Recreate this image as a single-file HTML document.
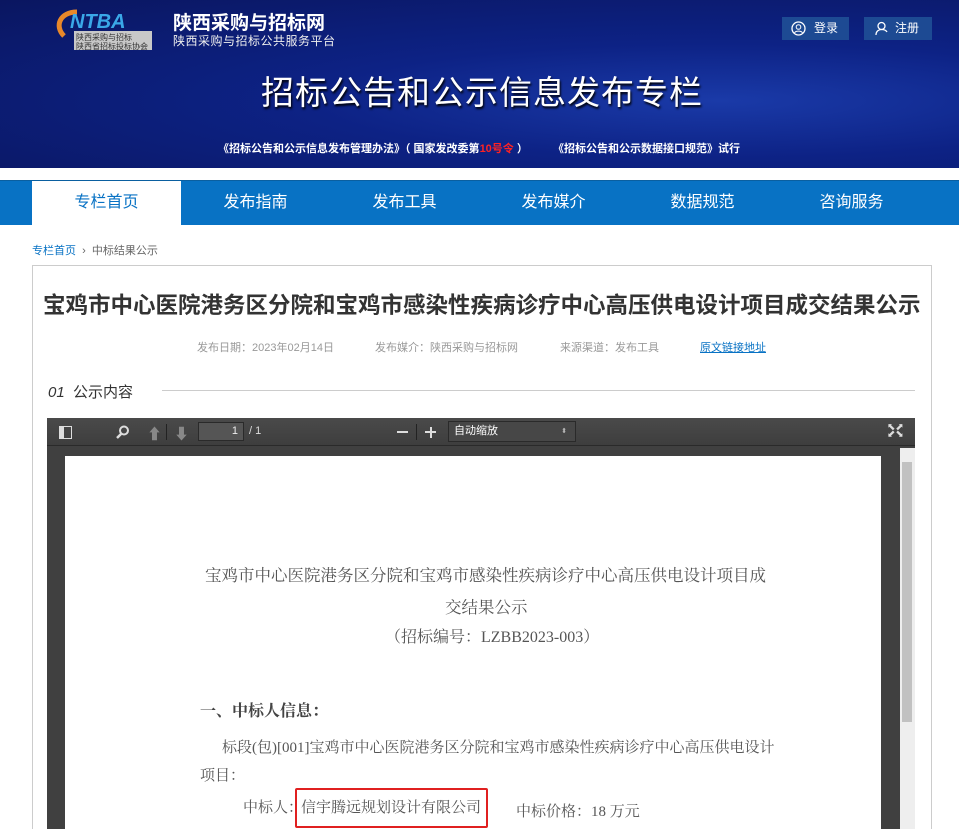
<!DOCTYPE html>
<html><head><meta charset="utf-8"><style>
*{margin:0;padding:0;box-sizing:border-box}
html,body{width:959px;height:829px;overflow:hidden}
body{background:#fff;font-family:"Liberation Sans","Noto Sans CJK SC",sans-serif;position:relative}
.hdr{position:absolute;left:0;top:0;width:959px;height:168px;background:radial-gradient(ellipse at 75% 60%,#1a3aa8 0%,#0d2285 40%,#0a1660 100%);overflow:hidden}
.abs{position:absolute}
.btn{position:absolute;top:17px;height:23px;background:#1d4a93;color:#fff;font-size:12px;line-height:23px}
.nav{position:absolute;left:0;top:180px;width:959px;height:45px;background:#0872c4;border-top:1px solid #0a5fa0}
.nav div{position:absolute;top:0;width:149px;height:44px;text-align:center;line-height:44px;color:#fff;font-size:16px}
.box{position:absolute;left:32px;top:265px;width:900px;height:580px;border:1px solid #ccc}
.meta{position:absolute;top:339px;font-size:11px;color:#999}
.pdf{position:absolute;left:47px;top:418px;width:868px;height:411px;background:#404040;overflow:hidden}
.tb{position:absolute;left:0;top:0;width:868px;height:28px;background:linear-gradient(#4a4a4a,#3e3e3e);border-bottom:1px solid #2a2a2a}
.pg{position:absolute;left:18px;top:38px;width:816px;height:400px;background:#fff;font-family:"Liberation Serif","Noto Serif CJK SC",serif;color:#555}
</style></head><body>
<div class="hdr">
 <svg class="abs" style="left:52px;top:6px" width="115" height="44"><path d="M12 30 C2 20,8 6,25 6" stroke="#e8882a" stroke-width="5" fill="none"/><text x="18" y="22" font-family="Liberation Sans" font-style="italic" font-weight="bold" font-size="20" fill="#3aa8e8">NTBA</text><rect x="22" y="25" width="78" height="19" fill="#c8c8c8"/><text x="24" y="34" font-size="8" fill="#333" font-family="Noto Sans CJK SC">陕西采购与招标</text><text x="24" y="43" font-size="8" fill="#333" font-family="Noto Sans CJK SC">陕西省招标投标协会</text></svg>
 <div class="abs" style="left:173px;top:8px;color:#fff;font-size:19px;font-weight:bold">陕西采购与招标网</div>
 <div class="abs" style="left:173px;top:32px;color:#eee;font-size:12px;letter-spacing:0.5px">陕西采购与招标公共服务平台</div>
 <div class="btn" style="left:782px;width:67px"><svg class="abs" style="left:9px;top:4px" width="15" height="15"><circle cx="7.5" cy="7.5" r="6.5" stroke="#fff" fill="none" stroke-width="1.3"/><circle cx="7.5" cy="6" r="2.3" stroke="#fff" fill="none"/><path d="M3.5 12c1-2.5 7-2.5 8 0" stroke="#fff" fill="none"/></svg><span class="abs" style="left:32px">登录</span></div>
 <div class="btn" style="left:864px;width:68px"><svg class="abs" style="left:11px;top:4px" width="15" height="15"><circle cx="6.5" cy="5" r="3.5" stroke="#fff" fill="none" stroke-width="1.3"/><path d="M1 14c0-4 3-5.5 5.5-5.5S11 9 12 11" stroke="#fff" fill="none" stroke-width="1.3"/></svg><span class="abs" style="left:31px">注册</span></div>
 <div class="abs" style="left:261px;top:66px;color:#fff;font-size:33px;letter-spacing:1px;text-shadow:1px 2px 2px #000">招标公告和公示信息发布专栏</div>
 <div class="abs" style="left:218px;top:140px;color:#fff;font-size:11px;font-weight:bold">《招标公告和公示信息发布管理办法》（ 国家发改委第<span style="color:#f22">10号令</span> ）</div>
 <div class="abs" style="left:553px;top:140px;color:#fff;font-size:11px;font-weight:bold">《招标公告和公示数据接口规范》试行</div>
</div>
<div class="nav">
 <div style="left:32px;background:#fff;color:#0872c4">专栏首页</div>
 <div style="left:181px">发布指南</div><div style="left:330px">发布工具</div><div style="left:479px">发布媒介</div><div style="left:628px">数据规范</div><div style="left:777px">咨询服务</div>
</div>
<div class="abs" style="left:32px;top:242px;font-size:11px;color:#0872c4">专栏首页 <span style="color:#666">&nbsp;›&nbsp; 中标结果公示</span></div>
<div class="box"></div>
<div class="abs" style="left:43px;top:288px;font-size:22.5px;font-weight:bold;color:#333;white-space:nowrap">宝鸡市中心医院港务区分院和宝鸡市感染性疾病诊疗中心高压供电设计项目成交结果公示</div>
<div class="meta" style="left:197px">发布日期：2023年02月14日</div>
<div class="meta" style="left:375px">发布媒介：陕西采购与招标网</div>
<div class="meta" style="left:560px">来源渠道：发布工具</div>
<div class="meta" style="left:700px;color:#0872c4;text-decoration:underline">原文链接地址</div>
<div class="abs" style="left:48px;top:381px;font-size:15px;color:#333"><i>01</i>&nbsp; 公示内容</div>
<div class="abs" style="left:162px;top:390px;width:753px;height:1px;background:#ccc"></div>
<div class="pdf">
 <div class="tb">
  <svg class="abs" style="left:12px;top:8px" width="13" height="13"><rect x="0.5" y="0.5" width="12" height="12" stroke="#ddd" fill="none"/><rect x="1" y="1" width="4" height="11" fill="#ddd"/></svg>
  <svg class="abs" style="left:69px;top:7px" width="14" height="14"><circle cx="8" cy="5.5" r="4" stroke="#ddd" stroke-width="2" fill="none"/><path d="M5 9 1 13" stroke="#ddd" stroke-width="2.5"/></svg>
  <div class="abs" style="left:100px;top:5px;color:#888;font-size:15px">⬆</div>
  <div class="abs" style="left:119px;top:6px;width:1px;height:16px;background:#222"></div>
  <div class="abs" style="left:127px;top:5px;color:#888;font-size:15px">⬇</div>
  <div class="abs" style="left:151px;top:4px;width:46px;height:19px;background:#555;border:1px solid #2a2a2a;color:#eee;font-size:11px;text-align:right;padding-right:5px;line-height:17px">1</div>
  <div class="abs" style="left:202px;top:7px;color:#ddd;font-size:11px">/ 1</div>
  <div class="abs" style="left:350px;top:13px;width:11px;height:2px;background:#ddd"></div>
  <div class="abs" style="left:369px;top:6px;width:1px;height:16px;background:#222"></div>
  <div class="abs" style="left:378px;top:13px;width:11px;height:2px;background:#ddd"></div><div class="abs" style="left:382.5px;top:8.5px;width:2px;height:11px;background:#ddd"></div>
  <div class="abs" style="left:401px;top:3px;width:128px;height:21px;background:#474747;border:1px solid #2a2a2a;color:#fff;font-size:11px;line-height:19px;padding-left:5px">自动缩放<span style="position:absolute;right:8px;font-size:7px;color:#bbb">⬍</span></div>
  <div class="abs" style="left:840px;top:6px;color:#ddd;font-size:10px;line-height:7px">⬉⬈<br>⬋⬊</div>
 </div>
 <div class="abs" style="left:853px;top:30px;width:15px;height:390px;background:#eee"><div class="abs" style="left:2px;top:14px;width:10px;height:260px;background:#c1c1c1"></div></div>
 <div class="pg">
  <div class="abs" style="left:140px;top:106px;font-size:16.5px;white-space:nowrap">宝鸡市中心医院港务区分院和宝鸡市感染性疾病诊疗中心高压供电设计项目成</div>
  <div class="abs" style="left:380px;top:138px;font-size:16.5px">交结果公示</div>
  <div class="abs" style="left:320px;top:168px;font-size:16px">（招标编号：LZBB2023-003）</div>
  <div class="abs" style="left:135px;top:242px;font-size:16px;font-weight:bold;color:#444">一、中标人信息：</div>
  <div class="abs" style="left:157px;top:280px;font-size:15px;white-space:nowrap">标段(包)[001]宝鸡市中心医院港务区分院和宝鸡市感染性疾病诊疗中心高压供电设计</div>
  <div class="abs" style="left:135px;top:308px;font-size:15px">项目：</div>
  <div class="abs" style="left:178px;top:340px;font-size:15px">中标人：</div>
  <div class="abs" style="left:230px;top:332px;width:193px;height:40px;border:2px solid #e02020;border-radius:2px"></div>
  <div class="abs" style="left:236px;top:340px;font-size:15px">信宇腾远规划设计有限公司</div>
  <div class="abs" style="left:451px;top:344px;font-size:15px">中标价格：18 万元</div>
 </div>
</div>
</body></html>
